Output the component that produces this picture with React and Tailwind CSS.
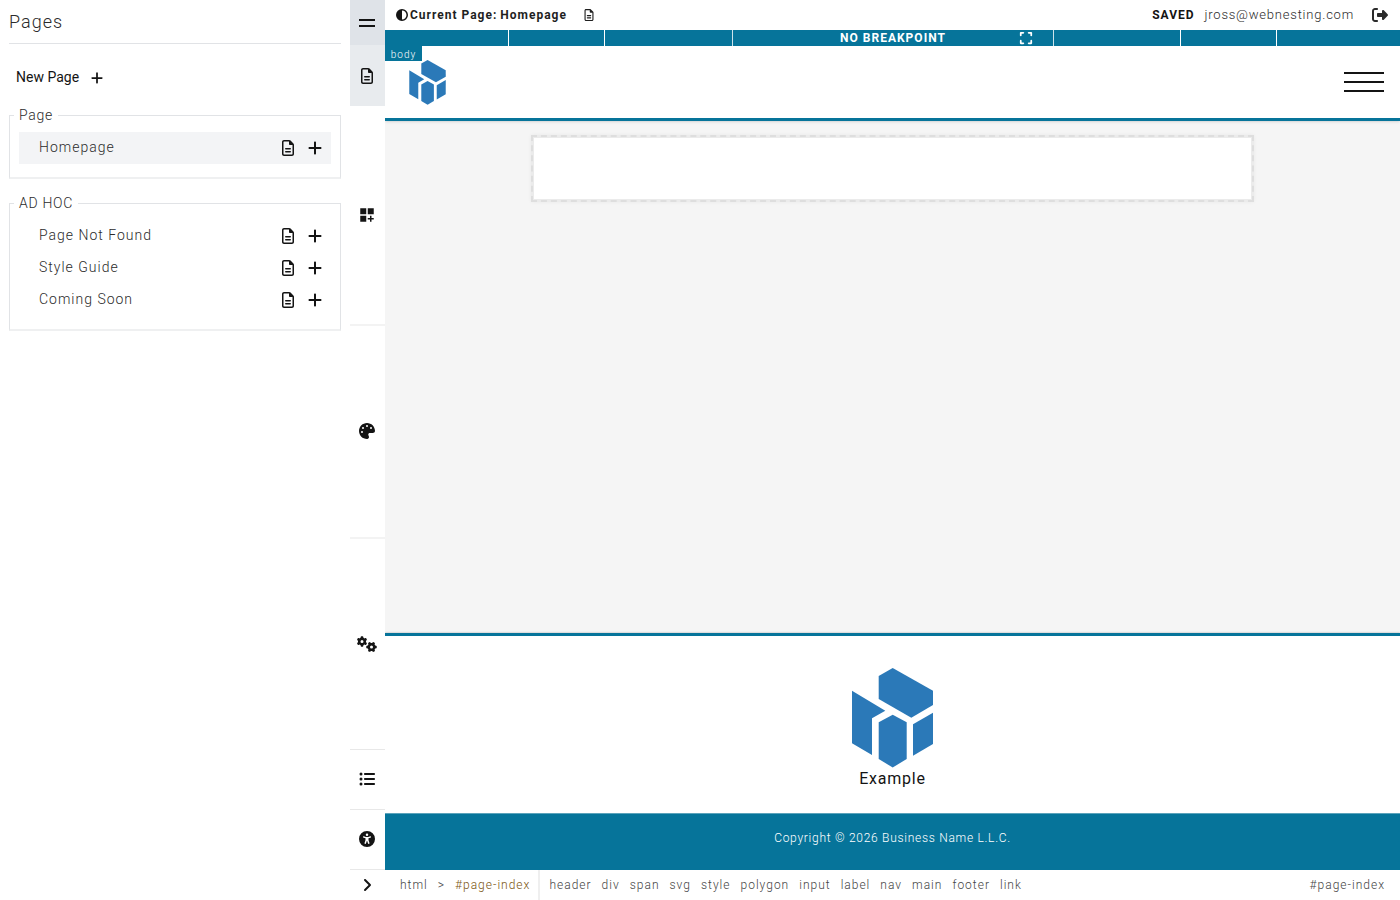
import {
  FaAngleRight,
  FaCircleHalfStroke,
  FaExpand,
  FaGears,
  FaListUl,
  FaPalette,
  FaPlus,
  FaRegFileLines,
  FaRightFromBracket,
  FaUniversalAccess,
} from 'react-icons/fa6'
import { MdDashboardCustomize } from 'react-icons/md'
import clsx from 'clsx'

const pageGroups = [
  { name: 'Page', pages: ['Homepage'] },
  { name: 'AD HOC', pages: ['Page Not Found', 'Style Guide', 'Coming Soon'] },
]

const elements = ['header', 'div', 'span', 'svg', 'style', 'polygon', 'input', 'label', 'nav', 'main', 'footer', 'link']

const currentPage = 'Homepage'

function Logo({ className }) {
  return (
    <svg viewBox="0 0 81 100" className={className} fill="#2b79b8" role="img" aria-label="Logo">
      <polygon points="26.7,8 40.7,0 81,22.7 81,37 59.3,49.7 26.7,31" />
      <polygon points="0,22.7 33.3,42.7 20,50.3 20,87 0,75.3" />
      <polygon points="26.7,54.3 40.7,46.7 54.7,54.3 54.7,91 40.7,99.5 26.7,91" />
      <polygon points="61,56.3 81,44.7 81,76 61,87.7" />
    </svg>
  )
}

function PageRow({ name }) {
  return (
    <li className={clsx('flex h-8 items-center pl-5 pr-2', name === currentPage && 'bg-[#f3f4f6]')}>
      <a href="#" className="flex-1 pb-0.5 text-sm">{name}</a>
      <button type="button" aria-label={`${name} settings`} className="mr-[11px] text-[#141414]">
        <FaRegFileLines className="size-4" />
      </button>
      <button type="button" aria-label={`Add page under ${name}`} className="text-[#141414]">
        <FaPlus className="size-4" />
      </button>
    </li>
  )
}

function PagesPanel() {
  return (
    <aside className="w-[350px] shrink-0 px-[9px]">
      <h2 className="flex h-11 items-center border-b border-[#e1e3e6] text-lg">Pages</h2>
      <button type="button" className="ml-[7px] mt-[23px] flex items-center gap-[11px] text-sm font-normal tracking-normal text-[#141414]">
        New Page
        <FaPlus className="mt-0.5 size-3.5" />
      </button>
      <div className="mt-[17px] flex flex-col gap-[13px]">
        {pageGroups.map((group) => (
          <fieldset key={group.name} className="border border-b-2 border-[#e1e3e6] border-b-[#eff0f1] px-[9px] pb-[13px] pt-[6px]">
            <legend className="-ml-[5px] px-[5px] text-sm leading-[22px] tracking-wider">{group.name}</legend>
            <ul>
              {group.pages.map((name) => (
                <PageRow key={name} name={name} />
              ))}
            </ul>
          </fieldset>
        ))}
      </div>
    </aside>
  )
}

function ToolButton({ label, className, children }) {
  return (
    <button type="button" aria-label={label} className={clsx('flex w-full items-center justify-center pr-px', className)}>
      {children}
    </button>
  )
}

function ToolRail() {
  return (
    <nav className="flex w-[35px] shrink-0 flex-col text-[#141414]">
      <ToolButton label="Menu" className="h-[45px] flex-col gap-1 bg-[#dfe3e8] pt-px">
        <span className="h-0.5 w-4 bg-[#141414]" />
        <span className="h-0.5 w-4 bg-[#141414]" />
      </ToolButton>
      <ToolButton label="Pages" className="h-[61px] bg-[#e8ebee]">
        <FaRegFileLines className="size-4" />
      </ToolButton>
      <ToolButton label="Components" className="grow basis-[10px] border-b-2 border-[#f3f3f3]">
        <MdDashboardCustomize className="size-[18px]" />
      </ToolButton>
      <ToolButton label="Styles" className="grow basis-0 border-b-2 border-[#f3f3f3]">
        <FaPalette className="size-4" />
      </ToolButton>
      <ToolButton label="Settings" className="grow basis-0 border-b border-[#e8e8e8]">
        <FaGears className="size-5" />
      </ToolButton>
      <ToolButton label="Outline" className="h-[60px] border-b border-[#e8e8e8]">
        <FaListUl className="size-4" />
      </ToolButton>
      <ToolButton label="Accessibility" className="h-[60px] border-b border-[#e8e8e8]">
        <FaUniversalAccess className="size-4" />
      </ToolButton>
      <ToolButton label="Expand" className="h-[30px]">
        <FaAngleRight className="size-4" />
      </ToolButton>
    </nav>
  )
}

function TopBar() {
  return (
    <header className="flex h-[30px] shrink-0 items-center justify-between pl-[11px] pr-3">
      <div className="flex items-center text-xs font-bold text-[#1f1f1f]">
        <FaCircleHalfStroke className="mr-0.5 size-3 text-[#141414]" />
        <span>Current Page:</span>
        <span className="ml-[3px]">{currentPage}</span>
        <button type="button" aria-label="Page settings" className="ml-4">
          <FaRegFileLines className="size-3" />
        </button>
      </div>
      <div className="flex items-center">
        <span className="text-xs font-bold text-[#141414]">SAVED</span>
        <a href="#" className="ml-[10px] text-[13px] tracking-[0.06em]">jross@webnesting.com</a>
        <button type="button" aria-label="Sign out" className="ml-[18px] text-[#2b2b2b]">
          <FaRightFromBracket className="size-4" />
        </button>
      </div>
    </header>
  )
}

function BreakpointBar() {
  return (
    <div className="flex h-4 shrink-0 bg-[#06749a] text-white">
      <button type="button" aria-label="Breakpoint 1" className="flex-1 border-r border-white" />
      <button type="button" aria-label="Breakpoint 2" className="w-24 border-r border-white" />
      <button type="button" aria-label="Breakpoint 3" className="w-32 border-r border-white/80" />
      <div className="relative flex w-80 items-center justify-center">
        <span className="text-xs font-bold leading-4">NO BREAKPOINT</span>
        <button type="button" aria-label="Full screen" className="absolute right-5">
          <FaExpand className="size-3.5" />
        </button>
      </div>
      <button type="button" aria-label="Breakpoint 4" className="w-32 border-x border-white border-l-white/80" />
      <button type="button" aria-label="Breakpoint 5" className="w-24 border-r border-white" />
      <button type="button" aria-label="Breakpoint 6" className="flex-1" />
    </div>
  )
}

function Canvas() {
  return (
    <div className="relative flex min-h-0 flex-1 flex-col overflow-hidden bg-[#f5f5f5]">
      <span className="absolute left-0 top-0 h-[15px] w-[37px] bg-[#06749a] text-center text-[10px] leading-[18px] text-white">body</span>
      <div className="flex h-[75px] shrink-0 items-center justify-between border-b-[3px] border-[#06749a] bg-white pl-6 pr-4 shadow-sm">
        <Logo className="h-[45px] w-[37px]" />
        <button type="button" aria-label="Open menu" className="flex w-10 flex-col gap-[7px]">
          <span className="h-0.5 w-full bg-[#141414]" />
          <span className="h-0.5 w-full bg-[#141414]" />
          <span className="h-0.5 w-full bg-[#141414]" />
        </button>
      </div>
      <main className="flex-1 px-[145px] pt-[14px]">
        <div className="mx-auto h-[67px] max-w-[723px] border-2 border-dashed border-[#dedede] bg-[#ebebeb] p-px shadow-[0_0_4px_rgba(0,0,0,0.05)]">
          <div className="h-full bg-white" />
        </div>
      </main>
      <footer className="shadow-[0_0_2px_rgba(0,0,0,0.3)]">
        <div className="flex h-[180px] flex-col items-center border-t-[3px] border-[#06749a] bg-white pt-8 text-[#141414]">
          <Logo className="h-[100px] w-[81px]" />
          <span className="text-base font-normal leading-[22px] tracking-wider">Example</span>
        </div>
        <div className="h-[57px] border-t border-[#5ba3bb] bg-[#06749a] pt-[15px] text-center text-xs leading-[18px] tracking-[0.06em] text-white">
          Copyright © 2026 Business Name L.L.C.
        </div>
      </footer>
    </div>
  )
}

function StatusBar() {
  return (
    <div className="flex h-[30px] shrink-0 items-center pr-[15px] text-xs text-[#444]">
      <div className="flex h-full items-center gap-[10px] border-r-2 border-[#efefef] pl-[15px] pr-2">
        <a href="#">html</a>
        <span>&gt;</span>
        <a href="#" className="text-[#7a5510]">#page-index</a>
      </div>
      <div className="flex flex-1 gap-[10px] pl-[9px]">
        {elements.map((tag) => (
          <a key={tag} href="#">{tag}</a>
        ))}
      </div>
      <span>#page-index</span>
    </div>
  )
}

export default function App() {
  return (
    <div className="flex h-screen bg-white font-['Roboto',sans-serif] font-light tracking-[1px] text-[#2b2b2b]">
      <PagesPanel />
      <ToolRail />
      <div className="flex min-w-0 flex-1 flex-col">
        <TopBar />
        <BreakpointBar />
        <Canvas />
        <StatusBar />
      </div>
    </div>
  )
}
